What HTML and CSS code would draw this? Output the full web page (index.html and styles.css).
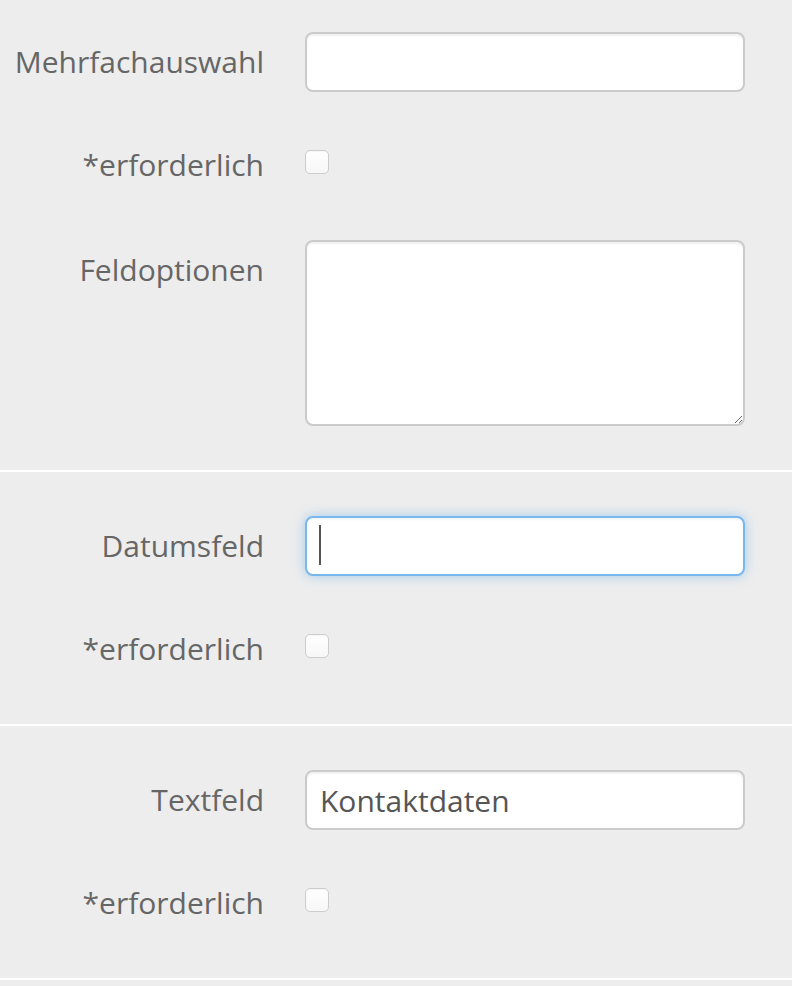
FILE: index.html
```html
<!DOCTYPE html>
<html lang="de">
<head>
<meta charset="utf-8">
<title>Formularfelder</title>
<link rel="stylesheet" href="styles.css">
</head>
<body>
<div class="form">
  <section class="section section-first">
    <div class="row row-input">
      <label class="label">Mehrfachauswahl</label>
      <div class="control"><input class="field" type="text"></div>
    </div>
    <div class="row row-check">
      <label class="label">*erforderlich</label>
      <div class="control"><input class="check" type="checkbox"></div>
    </div>
    <div class="row row-area">
      <label class="label label-area">Feldoptionen</label>
      <div class="control"><textarea class="area"></textarea></div>
    </div>
  </section>
  <section class="section">
    <div class="row row-input">
      <label class="label">Datumsfeld</label>
      <div class="control caret-wrap"><input class="field field-focus" type="text"><span class="caret"></span></div>
    </div>
    <div class="row row-check">
      <label class="label">*erforderlich</label>
      <div class="control"><input class="check" type="checkbox"></div>
    </div>
  </section>
  <section class="section">
    <div class="row row-input">
      <label class="label">Textfeld</label>
      <div class="control"><input class="field" type="text" value="Kontaktdaten"></div>
    </div>
    <div class="row row-check">
      <label class="label">*erforderlich</label>
      <div class="control"><input class="check" type="checkbox"></div>
    </div>
  </section>
  <section class="section section-rest"></section>
</div>
</body>
</html>
```
FILE: styles.css
```css
html, body {
  margin: 0;
  padding: 0;
  background: #ededed;
}

body {
  font-family: "Open Sans", "Noto Sans", "Liberation Sans", sans-serif;
  font-size: 30px;
  color: #666;
}

.section {
  padding: 44px 0 55px;
  border-bottom: 2px solid #fff;
}

.section-first {
  padding-top: 32px;
  padding-bottom: 44px;
}

.section-rest {
  padding: 0;
  height: 40px;
  border-bottom: none;
}

.row {
  display: grid;
  grid-template-columns: 264px 440px;
  column-gap: 41px;
  align-items: start;
}

.label {
  text-align: right;
  line-height: 40px;
  white-space: nowrap;
}

.row-input .label {
  line-height: 60px;
}

.row-check {
  margin-top: 53px;
}

.row-area {
  margin-top: 55px;
}

.label-area {
  padding-top: 10px;
}

.control {
  display: flex;
}

.field {
  box-sizing: border-box;
  width: 440px;
  height: 60px;
  margin: 0;
  padding: 0 13px;
  border: 2px solid #cbcbcb;
  border-radius: 8px;
  background: #fff;
  box-shadow: inset 0 2px 2px rgba(0, 0, 0, 0.06);
  font-family: inherit;
  font-size: 30px;
  color: #555;
  outline: none;
}

.field-focus {
  border-color: #79b7ef;
  box-shadow: inset 0 2px 2px rgba(0, 0, 0, 0.04), 0 0 12px rgba(102, 175, 233, 0.55);
}

.caret-wrap {
  position: relative;
}

.caret {
  position: absolute;
  left: 14px;
  top: 9px;
  width: 2px;
  height: 40px;
  background: #555;
}

.area {
  box-sizing: border-box;
  width: 440px;
  height: 186px;
  margin: 0;
  padding: 8px 13px;
  border: 2px solid #cbcbcb;
  border-radius: 8px;
  background: #fff;
  box-shadow: inset 0 2px 2px rgba(0, 0, 0, 0.06);
  font-family: inherit;
  font-size: 30px;
  color: #555;
  outline: none;
  resize: vertical;
}

.check {
  -webkit-appearance: none;
  appearance: none;
  box-sizing: border-box;
  width: 24px;
  height: 24px;
  margin: 5px 0 0;
  border: 1px solid #cdcdcd;
  border-radius: 5px;
  background: linear-gradient(#fff, #f7f7f7);
  box-shadow: inset 0 1px 1px rgba(0, 0, 0, 0.04);
}
```
